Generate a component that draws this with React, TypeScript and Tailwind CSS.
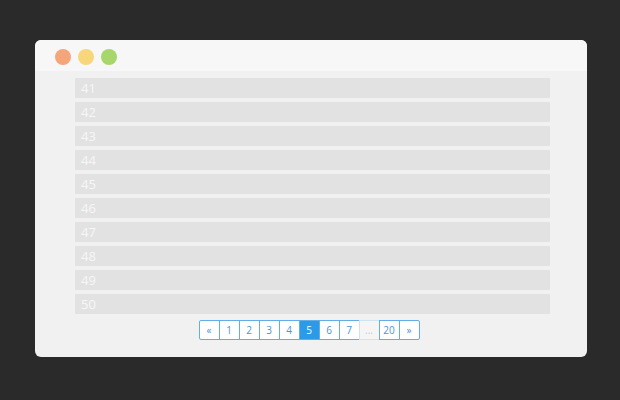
const rows = [41, 42, 43, 44, 45, 46, 47, 48, 49, 50];
const pages = ["«", "1", "2", "3", "4", "5", "6", "7", "...", "20", "»"];

export default function App() {
  return (
    <div className="w-[620px] h-[400px] bg-[#2a2a2a] pt-[40px] font-['Open_Sans',sans-serif]">
      <div className="ml-[35px] w-[552px] h-[317px] rounded-[6px] bg-[#f1f1f1] overflow-hidden">
        <div className="h-[31px] bg-[#f7f7f7] flex items-center gap-[7px] pl-[20px] pt-[3px]">
          <span className="w-[16px] h-[16px] rounded-full bg-[#f5a57a]" />
          <span className="w-[16px] h-[16px] rounded-full bg-[#f8d67b]" />
          <span className="w-[16px] h-[16px] rounded-full bg-[#a7d66b]" />
        </div>
        <div className="pt-[7px] ml-[40px] w-[475px] flex flex-col gap-[4px]">
          {rows.map((n) => (
            <div
              key={n}
              className="h-[20px] bg-[#e2e2e3] text-[#f7f7f7] text-[13px] leading-[20px] pl-[6px]"
            >
              {n}
            </div>
          ))}
        </div>
        <div className="flex justify-center mt-[6px] pr-[4px]">
          <div className="flex">
            {pages.map((p, i) => {
              const active = p === "5";
              const dots = p === "...";
              return (
                <span
                  key={i}
                  className={`h-[20px] w-[21px] flex items-center justify-center text-[10px] border border-[#63aee8] ${
                    i > 0 ? "-ml-px" : ""
                  } ${i === 0 ? "rounded-l-[2px]" : ""} ${
                    i === pages.length - 1 ? "rounded-r-[2px]" : ""
                  } ${
                    active
                      ? "bg-[#2b9be8] border-[#2b9be8] text-white relative"
                      : dots
                      ? "bg-[#f5f5f5] text-[#c9c9c9] border-[#cfe3f3]"
                      : "bg-white text-[#4a95d6]"
                  }`}
                >
                  {p}
                </span>
              );
            })}
          </div>
        </div>
      </div>
    </div>
  );
}
